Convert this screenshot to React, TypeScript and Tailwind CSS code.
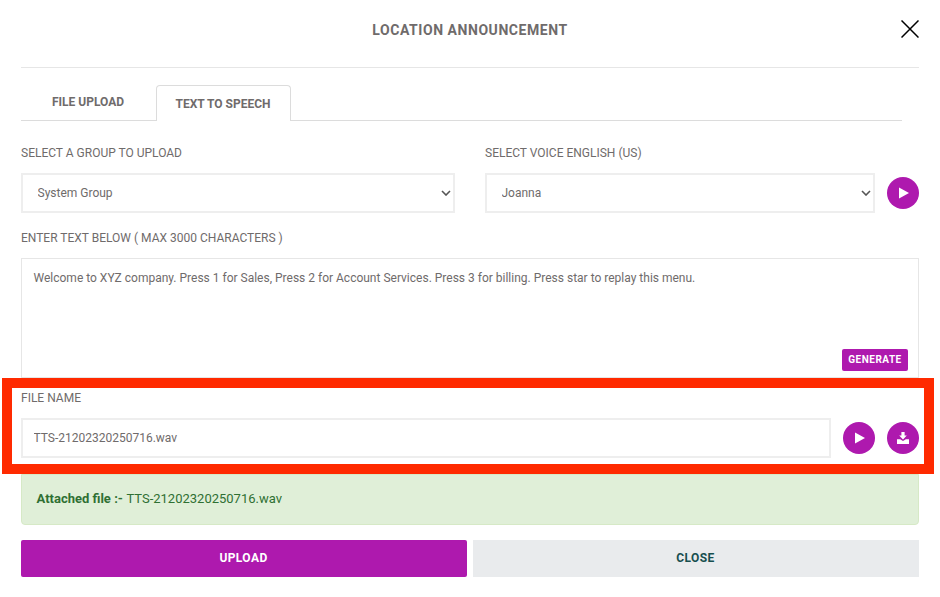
import React from "react";

const PURPLE = "bg-[#ae19ae]";

function PlayButton() {
  return (
    <button className={`flex h-8 w-8 shrink-0 items-center justify-center rounded-full ${PURPLE}`}>
      <svg width="12" height="12" viewBox="0 0 12 12" className="ml-[2px]">
        <path d="M1 .5 11 6 1 11.5z" fill="#fff" />
      </svg>
    </button>
  );
}

function DownloadButton() {
  return (
    <button className={`flex h-8 w-8 shrink-0 items-center justify-center rounded-full ${PURPLE}`}>
      <svg width="12" height="12" viewBox="0 0 12 12">
        <path d="M4.4 0h3.2v3.6h2.2L6 7.4 2.2 3.6h2.2z" fill="#fff" />
        <path d="M0 7.2h3.2L6 9l2.8-1.8H12V12H0z" fill="#fff" />
      </svg>
    </button>
  );
}

function Chevron() {
  return (
    <svg width="10" height="6" viewBox="0 0 10 6" fill="none" className="absolute right-[4px] top-[17px]">
      <path d="M1 1l4 4 4-4" stroke="#555" strokeWidth="1.6" />
    </svg>
  );
}

function SelectBox({ value, className }: { value: string; className: string }) {
  return (
    <div className={`relative ${className}`}>
      <select
        defaultValue={value}
        className="h-10 w-full appearance-none border-2 border-[#eeeeee] bg-white pl-[14.5px] text-[12px] text-[#6f6b6b] outline-none"
      >
        <option>{value}</option>
      </select>
      <Chevron />
    </div>
  );
}

export default function App() {
  return (
    <div className="relative h-[597px] w-[940px] overflow-hidden bg-white px-[21px] font-['Roboto',sans-serif] text-[#6f6b6b]">
      <div className="flex h-[68px] items-center justify-center border-b border-[#e6e6e6] pb-[6px]">
        <h2 className="text-[14px] font-bold tracking-[0.55px]">LOCATION ANNOUNCEMENT</h2>
      </div>
      <button className="absolute left-[901px] top-[20px]">
        <svg width="18" height="18" viewBox="0 0 18 18" className="block">
          <path d="M.5.5l17 17M17.5.5l-17 17" stroke="#000" strokeWidth="1.5" fill="none" />
        </svg>
      </button>

      <div className="mt-[17px] mr-[17px] flex h-[36px] items-end border-b border-[#dcdcdc] text-[12px] font-bold">
        <div className="flex h-[35px] w-[135px] items-center justify-center pb-[1px] pr-[1px]">FILE UPLOAD</div>
        <div className="mb-[-1px] flex h-[36px] w-[135px] items-center justify-center rounded-t-[4px] border border-b-0 border-[#dcdcdc] bg-white pt-[1px] pr-[1px]">
          TEXT TO SPEECH
        </div>
      </div>

      <div className="mt-[24px] flex gap-[30px] text-[12px] leading-[16px]">
        <div className="w-[434px]">
          <label className="block">SELECT A GROUP TO UPLOAD</label>
        </div>
        <label className="block">SELECT VOICE ENGLISH (US)</label>
      </div>
      <div className="mt-[12px] flex items-center">
        <SelectBox value="System Group" className="w-[434px]" />
        <SelectBox value="Joanna" className="ml-[30px] w-[390px]" />
        <div className="ml-[12px]">
          <PlayButton />
        </div>
      </div>

      <label className="mt-[17px] block text-[12px] leading-[16px]">ENTER TEXT BELOW ( MAX 3000 CHARACTERS )</label>
      <div className="relative mt-[12px] h-[120px] border border-[#e6e6e6] px-[11.5px] py-[11px] text-[12px] leading-[16px]">
        Welcome to XYZ company. Press 1 for Sales, Press 2 for Account Services. Press 3 for billing. Press star to replay this menu.
        <button className={`absolute bottom-[6px] right-[10px] h-[22px] w-[66px] rounded-[2px] text-[10px] font-bold tracking-[0.5px] text-white ${PURPLE}`}>
          GENERATE
        </button>
      </div>

      <label className="mt-[12px] block text-[12px] leading-[16px]">FILE NAME</label>
      <div className="mt-[12px] flex items-center gap-[12px]">
        <input
          readOnly
          value="TTS-21202320250716.wav"
          className="h-10 min-w-0 flex-1 border-2 border-[#eeeeee] pl-[10.5px] text-[12px] text-[#6f6b6b] outline-none"
        />
        <PlayButton />
        <DownloadButton />
      </div>

      <div className="mt-[16px] flex h-[51px] items-center rounded-b-[4px] border border-[#d6e9c6] bg-[#e0efd8] px-[14.5px] pb-[2px] text-[13px] text-[#2f7033]">
        <strong className="mr-[3.5px]">Attached file :-</strong> TTS-21202320250716.wav
      </div>

      <div className="mt-[15px] flex gap-[6px] text-[12px] font-bold tracking-[0.4px]">
        <button className={`h-[37px] flex-1 rounded-[2px] pr-[1px] pb-[2px] text-white ${PURPLE}`}>UPLOAD</button>
        <button className="h-[37px] flex-1 bg-[#e9ebed] pr-[1px] pb-[2px] text-[#174f4f]">CLOSE</button>
      </div>

      <div className="pointer-events-none absolute left-[2px] top-[378px] h-[96px] w-[932px] border-[10px] border-[#ff2a00]" />
    </div>
  );
}
